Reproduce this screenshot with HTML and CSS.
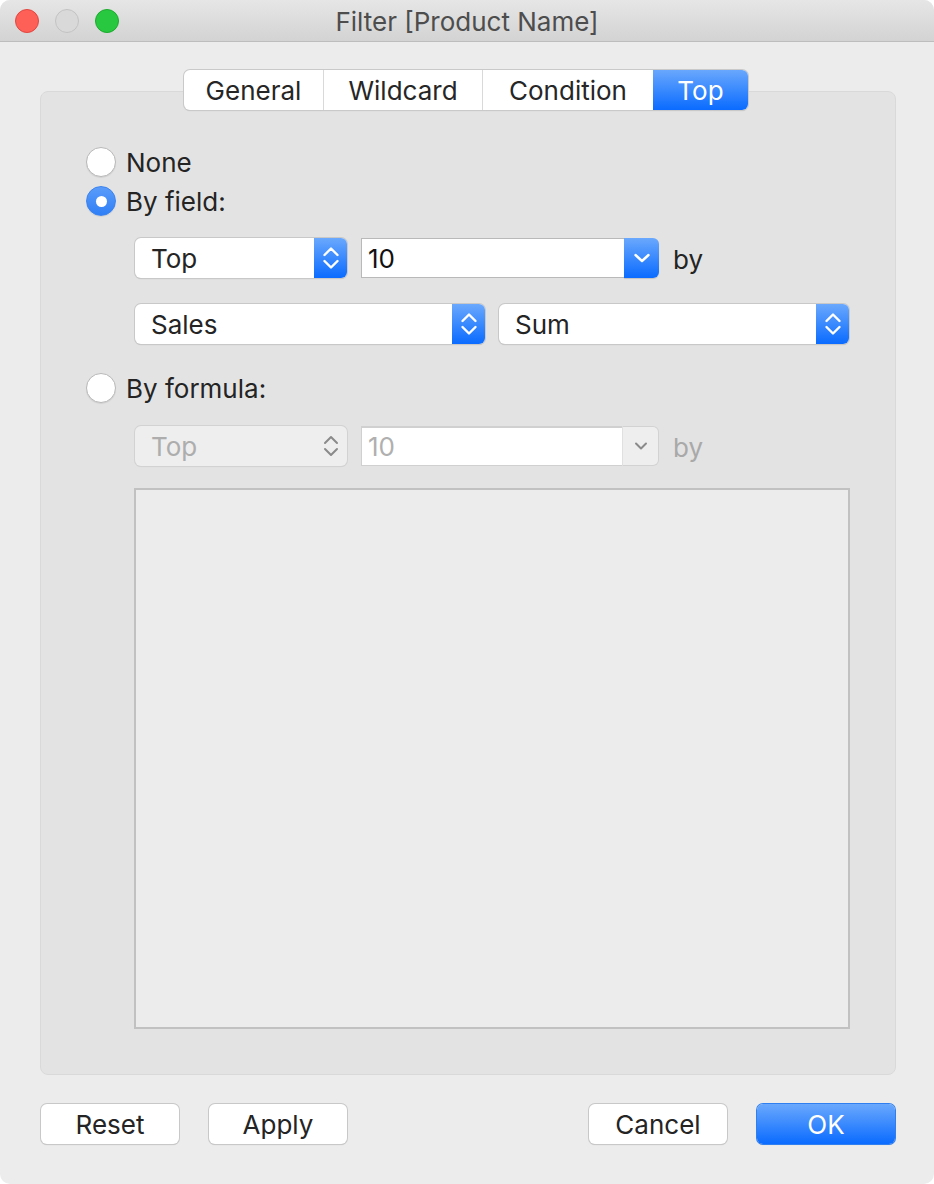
FILE: index.html
```html
<!DOCTYPE html>
<html lang="en">
<head>
    <meta charset="UTF-8">
    <title>Filter [Product Name]</title>
    <link rel="stylesheet" href="styles.css">
</head>
<body>
    <div class="window">
        <div class="titlebar">
            <div class="lights">
                <span class="light light-close"></span>
                <span class="light light-min"></span>
                <span class="light light-zoom"></span>
            </div>
            <div class="title">Filter [Product Name]</div>
            <div></div>
        </div>

        <div class="content">
            <div class="tabs">
                <div class="tab tab-general">General</div>
                <div class="tab tab-wildcard">Wildcard</div>
                <div class="tab tab-condition">Condition</div>
                <div class="tab tab-top active">Top</div>
            </div>

            <div class="panel">
                <label class="radio-row">
                    <span class="radio"></span>
                    <span>None</span>
                </label>
                <label class="radio-row">
                    <span class="radio checked"></span>
                    <span>By field:</span>
                </label>

                <div class="field-block">
                    <div class="row row-top">
                        <div class="popup popup-small">
                            <span class="popup-text">Top</span>
                            <span class="stepper">
                                <svg width="18" height="26" viewBox="0 0 18 26"><path d="M2.5 10 L9 3.5 L15.5 10 M2.5 16 L9 22.5 L15.5 16" fill="none" stroke="#fff" stroke-width="2.4" stroke-linecap="round" stroke-linejoin="round"/></svg>
                            </span>
                        </div>
                        <div class="combo">
                            <span class="combo-text">10</span>
                            <span class="combo-btn">
                                <svg width="18" height="12" viewBox="0 0 18 12"><path d="M2.5 3 L9 9 L15.5 3" fill="none" stroke="#fff" stroke-width="2.4" stroke-linecap="round" stroke-linejoin="round"/></svg>
                            </span>
                        </div>
                        <span class="by">by</span>
                    </div>
                    <div class="row row-pair">
                        <div class="popup">
                            <span class="popup-text">Sales</span>
                            <span class="stepper">
                                <svg width="18" height="26" viewBox="0 0 18 26"><path d="M2.5 10 L9 3.5 L15.5 10 M2.5 16 L9 22.5 L15.5 16" fill="none" stroke="#fff" stroke-width="2.4" stroke-linecap="round" stroke-linejoin="round"/></svg>
                            </span>
                        </div>
                        <div class="popup">
                            <span class="popup-text">Sum</span>
                            <span class="stepper">
                                <svg width="18" height="26" viewBox="0 0 18 26"><path d="M2.5 10 L9 3.5 L15.5 10 M2.5 16 L9 22.5 L15.5 16" fill="none" stroke="#fff" stroke-width="2.4" stroke-linecap="round" stroke-linejoin="round"/></svg>
                            </span>
                        </div>
                    </div>
                </div>

                <label class="radio-row radio-formula">
                    <span class="radio"></span>
                    <span>By formula:</span>
                </label>

                <div class="field-block">
                    <div class="row row-top row-disabled">
                        <div class="popup popup-small disabled">
                            <span class="popup-text">Top</span>
                            <span class="stepper">
                                <svg width="18" height="26" viewBox="0 0 18 26"><path d="M3 10 L9 4 L15 10 M3 16 L9 22 L15 16" fill="none" stroke="#8a8a8a" stroke-width="2" stroke-linecap="round" stroke-linejoin="round"/></svg>
                            </span>
                        </div>
                        <div class="combo disabled">
                            <span class="combo-text">10</span>
                            <span class="combo-btn">
                                <svg width="16" height="12" viewBox="0 0 16 12"><path d="M3 3.5 L8 8.5 L13 3.5" fill="none" stroke="#8a8a8a" stroke-width="2" stroke-linecap="round" stroke-linejoin="round"/></svg>
                            </span>
                        </div>
                        <span class="by">by</span>
                    </div>
                </div>

                <div class="formula-box"></div>
            </div>

            <div class="footer">
                <div class="button-group">
                    <button class="btn">Reset</button>
                    <button class="btn">Apply</button>
                </div>
                <div class="button-group">
                    <button class="btn">Cancel</button>
                    <button class="btn btn-default">OK</button>
                </div>
            </div>
        </div>
    </div>
</body>
</html>
```

FILE: styles.css
```css
html, body {
    margin: 0;
    padding: 0;
    background-color: #ffffff;
}
body {
    font-family: Inter, 'Noto Sans', sans-serif;
    font-size: 26px;
    color: #242424;
}
.window {
    width: 934px;
    height: 1184px;
    background-color: #ececec;
    border-radius: 10px;
    overflow: hidden;
    display: flex;
    flex-direction: column;
}

/* title bar */
.titlebar {
    height: 41px;
    border-bottom: 1px solid #bdbdbd;
    background: linear-gradient(#e6e6e6, #d3d3d3);
    display: grid;
    grid-template-columns: 1fr auto 1fr;
    align-items: center;
}
.lights {
    display: flex;
    gap: 16px;
    padding-left: 15px;
}
.light {
    width: 22px;
    height: 22px;
    border-radius: 50%;
    border: 1px solid transparent;
}
.light-close {
    background-color: #fe5f57;
    border-color: #e1463f;
}
.light-min {
    background-color: #d9d9d9;
    border-color: #c2c2c2;
}
.light-zoom {
    background-color: #28c840;
    border-color: #1caa2d;
}
.title {
    color: #4d4d4d;
    font-size: 26px;
    margin-top: 1px;
}

.content {
    padding: 28px 38px 0 40px;
    display: flex;
    flex-direction: column;
}

/* segmented tabs */
.tabs {
    align-self: center;
    margin-left: -4px;
    display: flex;
    height: 40px;
    margin-bottom: -19px;
    position: relative;
    z-index: 1;
    background-color: #fff;
    border-radius: 6px;
    box-shadow: 0 0 0 1px #c9c9c9, 0 1px 1px rgba(0,0,0,0.18);
}
.tab {
    display: flex;
    align-items: center;
    justify-content: center;
    border-left: 1px solid #d9d9d9;
    color: #262626;
}
.tab:first-child {
    border-left: none;
}
.tab-general { width: 139px; }
.tab-wildcard { width: 158px; }
.tab-condition { width: 170px; }
.tab-top { width: 95px; }
.tab.active {
    background: linear-gradient(#69a7fd, #0a6bff);
    color: #fff;
    border-left: none;
    border-radius: 0 6px 6px 0;
}

/* tab box */
.panel {
    height: 984px;
    box-sizing: border-box;
    background-color: #e3e3e3;
    border: 1px solid #d9d9d9;
    border-radius: 8px;
    padding: 55px 45px 0 45px;
    display: flex;
    flex-direction: column;
}
.radio-row {
    display: flex;
    align-items: center;
    gap: 10px;
    height: 30px;
    margin-bottom: 9px;
}
.radio-formula {
    margin-top: 29px;
    margin-bottom: 0;
}
.radio {
    width: 28px;
    height: 28px;
    border-radius: 50%;
    background-color: #fff;
    border: 1px solid #b8b8b8;
    box-shadow: 0 1px 1px rgba(0,0,0,0.08);
    display: flex;
    align-items: center;
    justify-content: center;
}
.radio.checked {
    background: linear-gradient(#5a9cfa, #2f7ff6);
    border-color: #3a83f0;
}
.radio.checked::after {
    content: '';
    width: 11px;
    height: 11px;
    border-radius: 50%;
    background-color: #fff;
}

.field-block {
    margin-left: 49px;
    margin-right: 1px;
    display: flex;
    flex-direction: column;
    gap: 26px;
    margin-top: 13px;
}
.row {
    display: flex;
    align-items: center;
    gap: 14px;
    height: 40px;
}
.row-disabled {
    margin-top: 10px;
}
.row-pair .popup {
    flex: 1;
}
.by {
    margin-top: 2px;
}
.row-disabled .by {
    color: #a9a9a9;
}

/* popup buttons */
.popup {
    height: 40px;
    box-sizing: border-box;
    display: flex;
    align-items: center;
    background-color: #fff;
    border-radius: 6px;
    box-shadow: 0 0 0 1px #c8c8c8, 0 1px 1px rgba(0,0,0,0.2);
    overflow: hidden;
}
.popup-small {
    width: 212px;
}
.popup-text {
    flex: 1;
    padding-left: 16px;
}
.stepper {
    width: 33px;
    height: 100%;
    display: flex;
    align-items: center;
    justify-content: center;
    background: linear-gradient(#6aa8fd, #0a6bff);
}
.popup.disabled {
    background-color: #eeeeee;
    box-shadow: 0 0 0 1px #d2d2d2, 0 1px 1px rgba(0,0,0,0.08);
    color: #adadad;
}
.popup.disabled .stepper {
    background: none;
}

/* combo box */
.combo {
    width: 298px;
    height: 40px;
    box-sizing: border-box;
    display: flex;
    align-items: stretch;
}
.combo-text {
    flex: 1;
    background-color: #fff;
    border: 1px solid #b9b9b9;
    border-right: none;
    padding-left: 6px;
    display: flex;
    align-items: center;
    color: #111;
}
.combo-btn {
    width: 35px;
    display: flex;
    align-items: center;
    justify-content: center;
    border-radius: 0 6px 6px 0;
    background: linear-gradient(#6aa8fd, #0a6bff);
    box-shadow: 0 1px 1px rgba(0,0,0,0.15);
}
.combo.disabled .combo-text {
    color: #b0b0b0;
    border-color: #d0d0d0;
    border-top-width: 2px;
}
.combo.disabled .combo-btn {
    background-color: #eeeeee;
    background-image: none;
    border: 1px solid #d2d2d2;
    border-left-color: #e0e0e0;
    box-shadow: none;
}

.formula-box {
    margin-top: 22px;
    margin-left: 48px;
    height: 541px;
    box-sizing: border-box;
    border: 2px solid #c1c1c1;
    background-color: #ececec;
}

/* bottom buttons */
.footer {
    margin-top: 29px;
    padding-left: 1px;
    padding-right: 1px;
    display: flex;
    justify-content: space-between;
}
.button-group {
    display: flex;
    gap: 30px;
}
.btn {
    width: 138px;
    height: 40px;
    font-family: inherit;
    font-size: 26px;
    color: #242424;
    background-color: #fff;
    border: none;
    border-radius: 6px;
    box-shadow: 0 0 0 1px #c8c8c8, 0 1px 1px rgba(0,0,0,0.2);
    padding: 0;
}
.btn-default {
    background: linear-gradient(#6aa8fd, #0a6bff);
    color: #fff;
    box-shadow: 0 0 0 1px #2f7ff0, 0 1px 1px rgba(0,0,0,0.15);
}
```
